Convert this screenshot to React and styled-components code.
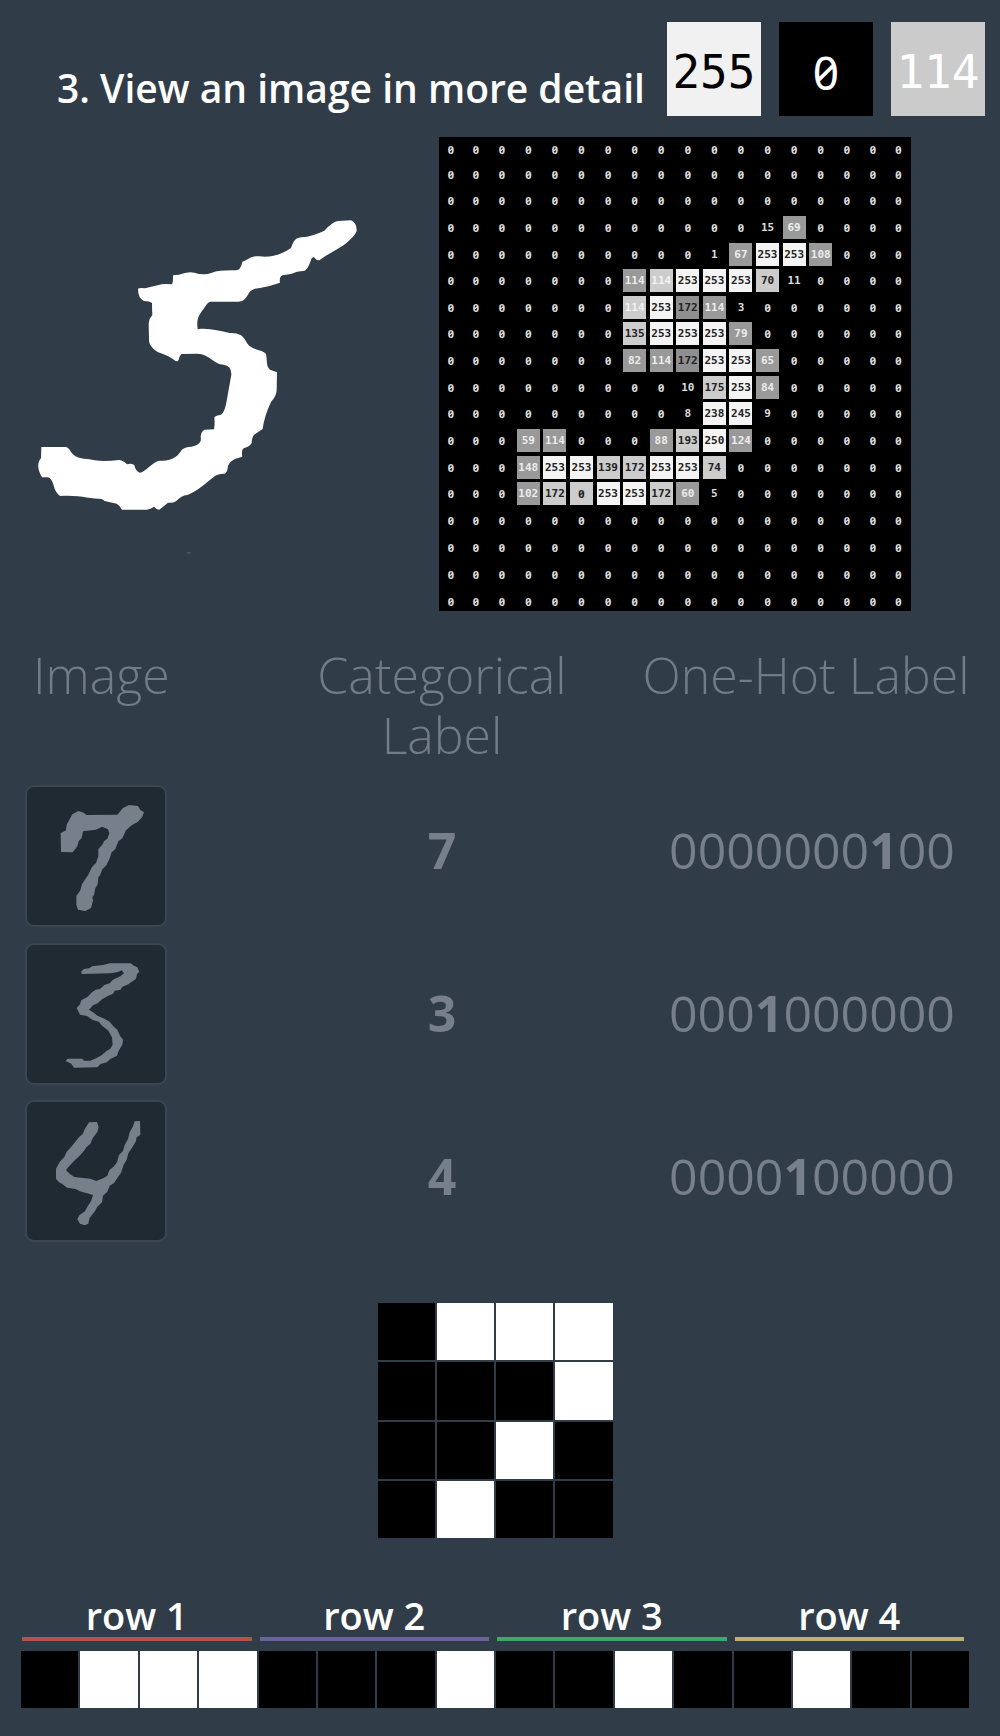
import React from 'react';
import styled, { createGlobalStyle, css } from 'styled-components';

const GlobalStyle = createGlobalStyle`
  *, *::before, *::after { box-sizing: border-box; }
  body {
    margin: 0;
    background: #303c48;
    color: #ffffff;
    font-family: 'Open Sans', 'Noto Sans', sans-serif;
  }
`;

const mono = "'DejaVu Sans Mono', 'Liberation Mono', monospace";

const slashedZero = css`
  font-family: 'Noto Sans', sans-serif;
  font-feature-settings: 'zero' 1;
`;

const Page = styled.main`
  min-height: 100vh;
  padding-bottom: 28px;
`;

const Header = styled.header`
  display: flex;
  justify-content: space-between;
  align-items: flex-start;
  gap: 22px;
  padding: 22px 17px 0 57px;
`;

const Title = styled.h1`
  margin: 0;
  padding-top: 38px;
  font-size: 39px;
  line-height: 56px;
  font-weight: 600;
  white-space: nowrap;
`;

const Swatches = styled.div`
  display: flex;
  gap: 18px;
`;

const Swatch = styled.div`
  width: 94px;
  height: 94px;
  padding-top: 3px;
  text-align: center;
  background: ${(p) => p.$bg};
  color: ${(p) => p.$ink};
  font: 46px/94px ${mono};
  ${(p) => p.$zero && slashedZero}
`;

const Hero = styled.section`
  display: grid;
  grid-template-columns: minmax(0, 439fr) minmax(0, 472fr) minmax(0, 89fr);
  align-items: start;
  margin-top: 21px;
`;

const Drawing = styled.div`
  padding: 63px 0 0 20px;
  svg { display: block; width: 100%; max-width: 360px; height: auto; }
`;

const MatrixFrame = styled.div`
  background: #000000;
  aspect-ratio: 472 / 474;
  overflow: hidden;
`;

const Matrix = styled.table`
  display: grid;
  height: 478px;
  grid-template-columns: 24px repeat(2, 26px) repeat(12, minmax(0, 1fr)) repeat(2, 26px) 25px;
  grid-template-rows: 24px repeat(13, minmax(0, 1fr)) repeat(4, 27px);
  tbody, tr { display: contents; }
`;

const tones = {
  k: ['transparent', '#dcdcdc'],
  w: ['#f4f4f4', '#222222'],
  l: ['#cccccc', '#222222'],
  m: ['#cccccc', '#f2f2f2'],
  g: ['#999999', '#ececec'],
  d: ['#8f8f8f', '#222222'],
};

const Pixel = styled.td`
  place-self: center;
  width: 23px;
  height: 23px;
  padding: 0;
  text-align: center;
  background: ${(p) => tones[p.$tone][0]};
  color: ${(p) => tones[p.$tone][1]};
  font: bold 11px/24px ${mono};
  ${(p) => p.$zero && slashedZero}
`;

const Labels = styled.table`
  width: 100%;
  margin-top: 34px;
  border-collapse: collapse;
  table-layout: fixed;
  color: #77808a;
`;

const Col = styled.col`
  width: ${(p) => p.$share}%;
`;

const HeadCell = styled.th`
  height: 123px;
  padding: ${(p) => p.$pad};
  vertical-align: top;
  text-align: ${(p) => p.$align || 'center'};
  color: #727c87;
  font-size: 50px;
  line-height: 60px;
  font-weight: 300;
`;

const LabelCell = styled.td`
  height: 163px;
  padding: 0 0 0 4px;
  text-align: center;
  font-size: 50px;
  line-height: 60px;
  font-weight: ${(p) => (p.$strong ? 700 : 400)};
`;

const ThumbCell = styled.td`
  padding: 6px 0 4px 25px;
  vertical-align: ${(p) => p.$align};
`;

const Thumb = styled.div`
  width: 142px;
  height: 142px;
  border: 2px solid #3a4750;
  border-radius: 9px;
  background: #202a32;
  svg { display: block; width: 100%; height: 100%; }
`;

const Flatten = styled.section`
  padding: 46px 31px 0 21px;
`;

const Square = styled.div`
  display: grid;
  grid-template-columns: repeat(4, minmax(0, 1fr));
  gap: 2px;
  width: 235px;
  margin: 0 auto;
`;

const Bit = styled.div`
  aspect-ratio: 1;
  background: ${(p) => (p.$on ? '#ffffff' : '#000000')};
`;

const RowLabels = styled.div`
  display: grid;
  grid-template-columns: repeat(4, minmax(0, 1fr));
  gap: 8px;
  margin: 56px 5px 10px 1px;
`;

const RowLabel = styled.div`
  padding-bottom: 1px;
  border-bottom: 4px solid ${(p) => p.$line};
  text-align: center;
  font-size: 38px;
  line-height: 42px;
  font-weight: 600;
`;

const Strip = styled.div`
  display: grid;
  grid-template-columns: repeat(16, minmax(0, 1fr));
  gap: 2px;
`;

const K = Array(18).fill('0');
const row = (text) => text.split(' ');
const pixels = [
  K,
  K,
  K,
  row('0 0 0 0 0 0 0 0 0 0 0 0 15 69g 0 0 0 0'),
  row('0 0 0 0 0 0 0 0 0 0 1 67g 253w 253w 108g 0 0 0'),
  row('0 0 0 0 0 0 0 114g 114m 253w 253w 253w 70l 11 0 0 0 0'),
  row('0 0 0 0 0 0 0 114m 253w 172d 114g 3 0 0 0 0 0 0'),
  row('0 0 0 0 0 0 0 135l 253w 253w 253w 79g 0 0 0 0 0 0'),
  row('0 0 0 0 0 0 0 82g 114g 172d 253w 253w 65g 0 0 0 0 0'),
  row('0 0 0 0 0 0 0 0 0 10 175l 253w 84g 0 0 0 0 0'),
  row('0 0 0 0 0 0 0 0 0 8 238w 245w 9 0 0 0 0 0'),
  row('0 0 0 59g 114g 0 0 0 88g 193l 250w 124g 0 0 0 0 0 0'),
  row('0 0 0 148g 253w 253w 139l 172l 253w 253w 74l 0 0 0 0 0 0 0'),
  row('0 0 0 102g 172l 0l 253w 253w 172l 60g 5 0 0 0 0 0 0 0'),
  K,
  K,
  K,
  K,
];

const samples = [
  {
    label: '7',
    align: 'bottom',
    viewBox: '51 51 414 414',
    path: 'M152 190 L168 181 L170 164 L187 133 L205 123 L221 128 L229 135 L322 134 L338 115 L357 105 L384 108 L391 120 L402 127 L396 142 L384 155 L366 165 L348 181 L337 205 L325 214 L316 237 L305 247 L298 268 L289 286 L277 298 L270 316 L265 322 L263 343 L256 355 L252 374 L247 382 L249 392 L243 414 L226 423 L204 419 L199 404 L199 378 L211 361 L216 342 L234 316 L246 291 L258 279 L265 259 L265 237 L277 224 L282 214 L292 206 L298 190 L294 178 L277 170 L257 179 L219 184 L215 204 L206 214 L202 229 L188 247 L153 246 Z',
  },
  {
    label: '3',
    align: 'middle',
    viewBox: '51 522 414 414',
    path: 'M214 601 L222 594 L238 592 L246 586 L279 582 L300 577 L362 577 L373 585 L382 589 L388 602 L381 609 L378 623 L355 640 L336 648 L332 656 L314 659 L309 668 L292 676 L276 685 L263 697 L249 703 L237 716 L253 727 L262 734 L280 742 L299 752 L312 768 L322 776 L330 794 L339 806 L337 821 L326 839 L321 854 L301 864 L291 874 L272 879 L262 889 L192 890 L184 878 L167 870 L173 863 L217 863 L222 869 L241 869 L258 862 L275 853 L286 842 L301 833 L308 821 L306 799 L295 779 L274 762 L267 752 L248 747 L231 735 L210 731 L200 711 L210 700 L214 688 L233 677 L246 664 L257 656 L270 654 L283 642 L299 637 L309 626 L331 616 L342 607 L335 598 L324 603 L302 607 L215 609 Z',
  },
  {
    label: '4',
    align: 'top',
    viewBox: '51 995 414 414',
    path: 'M237 1056 L261 1055 L266 1070 L262 1085 L249 1102 L241 1120 L230 1130 L221 1143 L208 1157 L192 1172 L175 1190 L168 1200 L180 1211 L193 1220 L219 1223 L241 1225 L259 1232 L281 1223 L292 1216 L298 1200 L312 1188 L321 1176 L327 1154 L339 1142 L344 1124 L354 1106 L359 1086 L369 1068 L374 1053 L390 1052 L391 1094 L380 1101 L377 1114 L367 1131 L355 1149 L350 1168 L341 1183 L333 1207 L322 1223 L312 1238 L299 1246 L292 1264 L279 1276 L276 1296 L262 1309 L253 1325 L239 1342 L235 1360 L224 1365 L210 1360 L202 1347 L208 1335 L225 1323 L232 1309 L243 1293 L249 1274 L231 1269 L210 1263 L197 1256 L171 1252 L158 1242 L147 1236 L138 1225 L138 1195 L149 1175 L163 1160 L170 1144 L184 1129 L198 1112 L207 1101 L218 1091 L224 1077 Z',
  },
];

const five =
  'M64 741 L136 741 C147 742 150 752 156 760 C170 777 192 775 224 781 Q254 785 297 780 Q312 782 321 793 Q332 789 343 795 Q346 812 359 818 Q367 819 387 801 Q407 783 419 782 Q448 784 467 770 Q475 766 485 750 Q493 741 515 740 Q530 738 540 727 Q544 721 542 710 Q543 694 554 689 L582 688 Q585 672 583 652 Q588 646 603 644 Q615 637 621 597 L634 524 Q635 497 610 494 Q596 494 587 487 C570 474 552 461 532 461 L484 462 Q477 470 476 480 Q470 488 460 478 Q444 467 423 460 C398 451 386 432 387 420 L386 370 Q387 356 397 345 Q396 329 396 309 Q389 303 372 303 Q354 295 354 266 Q360 262 375 265 L416 255 Q429 250 456 253 Q460 245 459 226 L477 224 Q504 213 523 218 Q551 227 576 218 Q596 210 650 211 Q663 207 667 185 C687 178 694 166 718 169 C756 174 790 161 813 144 C819 131 821 114 844 112 Q878 109 913 92 Q938 65 954 63 L993 61 Q1010 68 1010 92 Q1008 104 980 128 C964 142 922 162 898 181 Q889 182 884 173 Q876 168 872 183 Q862 211 852 213 Q833 212 813 222 L787 226 Q777 231 780 248 Q752 258 720 264 C688 267 689 278 681 289 C670 306 660 306 640 305 L571 305 Q563 306 550 328 C532 351 530 363 533 388 C562 383 598 392 629 399 Q650 398 663 406 C679 417 677 431 692 440 C711 452 733 451 738 463 C742 480 738 500 750 509 L771 517 L770 571 Q769 589 753 606 C739 636 731 663 728 687 Q718 693 706 702 Q696 706 695 729 Q689 740 671 745 Q663 751 667 770 L647 776 Q631 782 624 797 Q622 819 614 821 Q595 820 584 829 C558 848 534 874 502 885 Q484 886 468 904 Q458 910 444 908 Q429 920 418 929 Q409 928 402 920 Q391 927 381 929 L306 929 Q298 915 290 911 L254 903 L245 897 C212 897 180 884 120 888 Q106 877 102 860 Q96 836 84 832 L66 832 C52 809 51 788 63 775 Z';

const hot = [
  ['0000000', '1', '00'],
  ['000', '1', '000000'],
  ['0000', '1', '00000'],
];

const bits = [0, 1, 1, 1, 0, 0, 0, 1, 0, 0, 1, 0, 0, 1, 0, 0];
const lines = ['#b4524e', '#6c629c', '#3ca86c', '#bdb070'];

export default function App() {
  return (
    <Page>
      <GlobalStyle />
      <Header>
        <Title>3. View an image in more detail</Title>
        <Swatches>
          <Swatch $bg="#f1f1f1" $ink="#000000">255</Swatch>
          <Swatch $bg="#000000" $ink="#ffffff" $zero>0</Swatch>
          <Swatch $bg="#cbcbcb" $ink="#ffffff">114</Swatch>
        </Swatches>
      </Header>

      <Hero>
        <Drawing>
          <svg viewBox="0 0 1080 1110" aria-hidden="true">
            <path d={five} fill="#ffffff" />
            <ellipse cx="506" cy="1058" rx="7" ry="3" fill="#465864" />
          </svg>
        </Drawing>
        <MatrixFrame>
          <Matrix>
            <tbody>
              {pixels.map((cells, y) => (
                <tr key={y}>
                  {cells.map((cell, x) => (
                    <Pixel
                      key={x}
                      $tone={cell.replace(/\d/g, '') || 'k'}
                      $zero={parseInt(cell, 10) === 0}
                    >
                      {parseInt(cell, 10)}
                    </Pixel>
                  ))}
                </tr>
              ))}
            </tbody>
          </Matrix>
        </MatrixFrame>
      </Hero>

      <Labels>
        <colgroup>
          <Col $share={26} />
          <Col $share={36} />
          <Col $share={38} />
        </colgroup>
        <thead>
          <tr>
            <HeadCell scope="col" $pad="0 0 0 33px" $align="left">Image</HeadCell>
            <HeadCell scope="col" $pad="0 0 0 4px">Categorical<br />Label</HeadCell>
            <HeadCell scope="col" $pad="0 8px 0 0">One-Hot Label</HeadCell>
          </tr>
        </thead>
        <tbody>
          {samples.map((sample, i) => (
            <tr key={sample.label}>
              <ThumbCell $align={sample.align}>
                <Thumb>
                  <svg viewBox={sample.viewBox} aria-hidden="true">
                    <path d={sample.path} fill="#77808a" />
                  </svg>
                </Thumb>
              </ThumbCell>
              <LabelCell $strong>{sample.label}</LabelCell>
              <LabelCell>
                {hot[i][0]}<b>{hot[i][1]}</b>{hot[i][2]}
              </LabelCell>
            </tr>
          ))}
        </tbody>
      </Labels>

      <Flatten>
        <Square>
          {bits.map((bit, i) => <Bit key={i} $on={bit === 1} />)}
        </Square>
        <RowLabels>
          {lines.map((line, i) => (
            <RowLabel key={line} $line={line}>{`row ${i + 1}`}</RowLabel>
          ))}
        </RowLabels>
        <Strip>
          {bits.map((bit, i) => <Bit key={i} $on={bit === 1} />)}
        </Strip>
      </Flatten>
    </Page>
  );
}
